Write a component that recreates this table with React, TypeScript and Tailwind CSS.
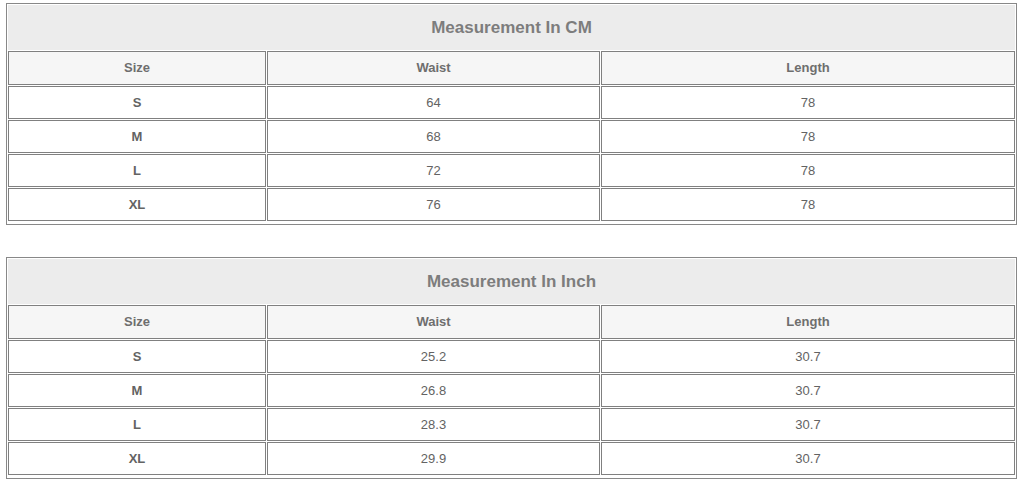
const cm = [
  ["S", "64", "78"],
  ["M", "68", "78"],
  ["L", "72", "78"],
  ["XL", "76", "78"],
];

const inch = [
  ["S", "25.2", "30.7"],
  ["M", "26.8", "30.7"],
  ["L", "28.3", "30.7"],
  ["XL", "29.9", "30.7"],
];

function SizeTable({ title, rows }: { title: string; rows: string[][] }) {
  return (
    <table className="w-[1011px] border-separate border-spacing-[1px] border border-[#888] pb-[2px] text-[13px]">
      <thead>
        <tr>
          <th colSpan={3} className="h-[45px] bg-[#ececec] text-[17px] font-bold text-[#7d7d7d]">
            {title}
          </th>
        </tr>
        <tr className="bg-[#f6f6f6] text-[#6e6e6e]">
          <th className="h-[34px] w-[258px] border border-[#808080] font-bold">Size</th>
          <th className="h-[34px] w-[333px] border border-[#808080] font-bold">Waist</th>
          <th className="h-[34px] border border-[#808080] font-bold">Length</th>
        </tr>
      </thead>
      <tbody>
        {rows.map((r) => (
          <tr key={r[0]} className="bg-white text-[#636363]">
            <td className="h-[33px] border border-[#808080] text-center font-bold">{r[0]}</td>
            <td className="h-[33px] border border-[#808080] text-center">{r[1]}</td>
            <td className="h-[33px] border border-[#808080] text-center">{r[2]}</td>
          </tr>
        ))}
      </tbody>
    </table>
  );
}

export default function App() {
  return (
    <div className="min-h-screen bg-white pt-[3px] pl-[6px] font-['Liberation_Sans',Arial,sans-serif]">
      <SizeTable title="Measurement In CM" rows={cm} />
      <div className="mt-[32px]">
        <SizeTable title="Measurement In Inch" rows={inch} />
      </div>
    </div>
  );
}
